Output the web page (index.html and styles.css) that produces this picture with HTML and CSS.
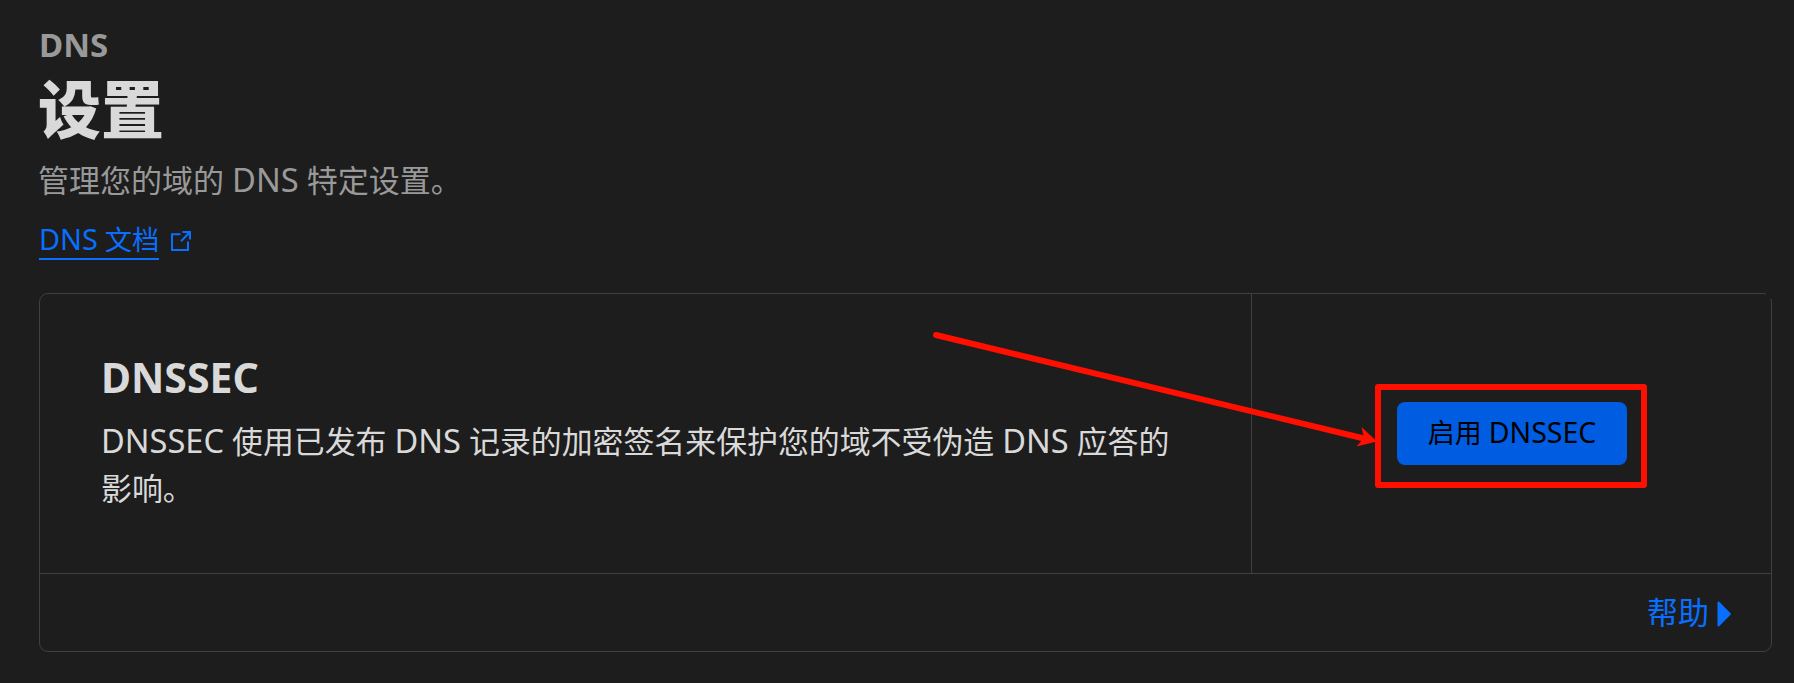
FILE: index.html
```
<!DOCTYPE html>
<html lang="zh-CN">
<head>
<meta charset="utf-8">
<title>DNS 设置</title>
<link rel="stylesheet" href="styles.css">
</head>
<body>
<main class="page">
  <header class="header">
    <p class="eyebrow">DNS</p>
    <h1 class="title">设置</h1>
    <p class="subtitle">管理您的域的 <span class="latin">DNS</span> 特定设置。</p>
    <a class="doc-link" href="#"><span class="doc-text"><span class="latin">DNS</span> 文档</span><svg class="doc-icon" viewBox="0 0 20 20"><path d="M9.5 3.2H1V19h16v-8.6M11.5 1H19v7.6M19 1l-9 9.2"/></svg></a>
  </header>
  <section class="card">
    <div class="card-main">
      <div class="card-info">
        <h2 class="card-title">DNSSEC</h2>
        <p class="card-text"><span class="latin">DNSSEC</span> 使用已发布 <span class="latin">DNS</span> 记录的加密签名来保护您的域不受伪造 <span class="latin">DNS</span> 应答的<br>影响。</p>
      </div>
      <div class="card-action">
        <button class="button">启用 <span class="latin">DNSSEC</span></button>
      </div>
    </div>
    <div class="card-footer">
      <a class="help" href="#">帮助<svg class="caret" viewBox="0 0 14 26"><path d="M1.5 1.5 12.8 13 1.5 24.5Z"/></svg></a>
    </div>
  </section>
  <div class="highlight"></div>
  <svg class="arrow" viewBox="0 0 460 130"><path class="shaft" d="M16 15 442 118"/><path class="head" d="M457 121.500 441.500 107 444 118 436.500 126.500Z"/></svg>
</main>
</body>
</html>
```
FILE: styles.css
```
* { box-sizing: border-box; margin: 0; padding: 0; }
body {
  background: #1d1d1d;
  color: #d9d9d9;
  font-family: "Noto Sans", "Noto Sans CJK SC", sans-serif;
  overflow: hidden;
}
.page { position: relative; height: 683px; padding: 23px 22px 0 39px; }
.latin { font-size: 1.055em; line-height: 1; }
.header { height: 270px; display: flex; flex-direction: column; align-items: flex-start; }
.eyebrow { font-size: 33px; line-height: 44px; font-weight: 700; color: #999; }
.title { font-size: 63px; line-height: 80px; font-weight: 900; margin: 2px 0 0 -1px; }
.subtitle { font-size: 31px; line-height: 46px; margin: 8px 0 0 -1px; color: #999; white-space: nowrap; }
.doc-link { display: flex; align-items: center; gap: 12px; margin-top: 17px; color: #086fff; text-decoration: none; }
.doc-text { font-size: 27.300px; line-height: 39px; height: 40px; border-bottom: 2px solid #086fff; white-space: nowrap; }
.doc-icon { width: 20px; height: 20px; margin-top: 2px; fill: none; stroke: #086fff; stroke-width: 2; }
.card { position: relative; height: 359px; border: 1px solid #404040; border-radius: 9px; display: flex; flex-direction: column; }
.card::after { content: ""; position: absolute; top: -1px; right: -1px; width: 6px; height: 6px; background: #1d1d1d; }
.card-main { display: flex; height: 280px; border-bottom: 1px solid #404040; }
.card-info { width: 1211px; padding: 58px 0 0 61px; }
.card-title { font-size: 41px; line-height: 50px; font-weight: 700; }
.card-text { font-size: 30.900px; line-height: 46.500px; margin-top: 16px; white-space: nowrap; }
.card-action { flex: 1; border-left: 1px solid #404040; padding: 108px 0 0 145px; }
.button {
  display: block; width: 230px; height: 63px; padding-bottom: 4px; border: 0; border-radius: 8px;
  background: #005ce0; color: #000; font: inherit; font-size: 27px; white-space: nowrap;
}
.card-footer { flex: 1; display: flex; align-items: center; justify-content: flex-end; padding: 0 40px 4px 0; }
.help { display: flex; align-items: center; gap: 8px; font-size: 31px; color: #086fff; text-decoration: none; }
.caret { width: 14px; height: 26px; margin-top: 7px; fill: #086fff; stroke: #086fff; stroke-width: 2; stroke-linejoin: round; }
.highlight { position: absolute; left: 1375px; top: 384px; width: 272px; height: 104px; border: 6px solid #ff0f00; border-radius: 3px; }
.arrow { position: absolute; left: 920px; top: 320px; width: 460px; height: 130px; }
.shaft { stroke: #ff0f00; stroke-width: 6; stroke-linecap: round; }
.head { fill: #ff0f00; }
```
